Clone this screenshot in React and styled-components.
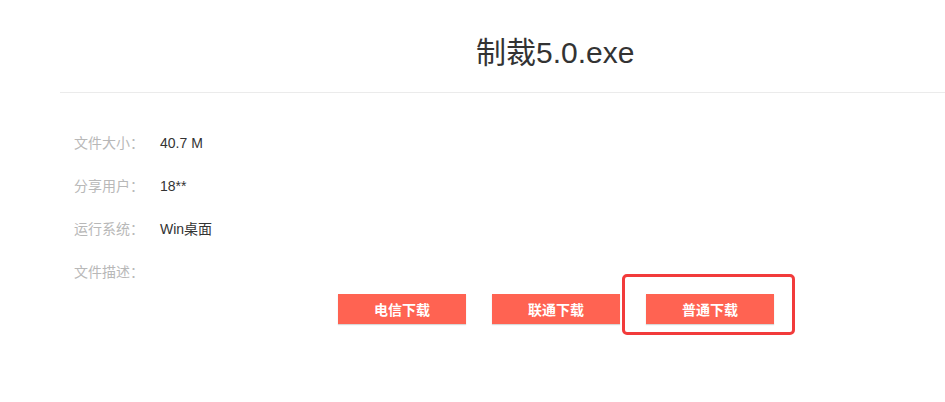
import React from "react";
import styled, { createGlobalStyle } from "styled-components";

const GlobalStyle = createGlobalStyle`
    body {
        margin: 0;
        background: #fff;
        font-family: "Liberation Sans", Arial, "Noto Sans CJK SC", sans-serif;
    }
`;

const Page = styled.div`
    width: 945px;
    height: 402px;
    overflow: hidden;
`;

const Header = styled.div`
    margin-left: 60px;
    height: 93px;
    box-sizing: border-box;
    padding: 37px 0 0 416px;
    border-bottom: 1px solid #ebebeb;
`;

const Title = styled.h1`
    margin: 0;
    font-size: 30px;
    line-height: 32px;
    font-weight: normal;
    color: #333;
    white-space: nowrap;
`;

const InfoList = styled.div`
    padding: 29px 0 0 74px;
`;

const InfoRow = styled.div`
    display: flex;
    height: 43px;
    line-height: 43px;
    font-size: 14px;
`;

const Label = styled.span`
    width: 86px;
    color: #b8b8b8;
`;

const Value = styled.span`
    color: #333;
`;

const Actions = styled.div`
    display: flex;
    gap: 26px;
    padding-left: 338px;
`;

const ButtonWrap = styled.div`
    position: relative;
`;

const DownloadButton = styled.button`
    width: 128px;
    height: 30px;
    border: none;
    padding: 0;
    background: #ff6352;
    box-shadow: 0 1px 1px #d8d8d8;
    color: #fff;
    font-family: "Liberation Sans", Arial, "Noto Sans CJK SC", sans-serif;
    font-size: 14px;
    font-weight: bold;
    cursor: pointer;
`;

const Highlight = styled.div`
    position: absolute;
    left: -24px;
    top: -20px;
    width: 173px;
    height: 61px;
    box-sizing: border-box;
    border: 3px solid #f23b3b;
    border-radius: 5px;
    pointer-events: none;
`;

const info = [
    { label: "文件大小：", value: "40.7 M" },
    { label: "分享用户：", value: "18**" },
    { label: "运行系统：", value: "Win桌面" },
    { label: "文件描述：", value: "" },
];

const buttons = ["电信下载", "联通下载", "普通下载"];

const App = () => (
    <Page>
        <GlobalStyle />
        <Header>
            <Title>制裁5.0.exe</Title>
        </Header>
        <InfoList>
            {info.map((row) => (
                <InfoRow key={row.label}>
                    <Label>{row.label}</Label>
                    <Value>{row.value}</Value>
                </InfoRow>
            ))}
        </InfoList>
        <Actions>
            {buttons.map((text, i) => (
                <ButtonWrap key={text}>
                    <DownloadButton>{text}</DownloadButton>
                    {i === buttons.length - 1 && <Highlight />}
                </ButtonWrap>
            ))}
        </Actions>
    </Page>
);

export default App;
